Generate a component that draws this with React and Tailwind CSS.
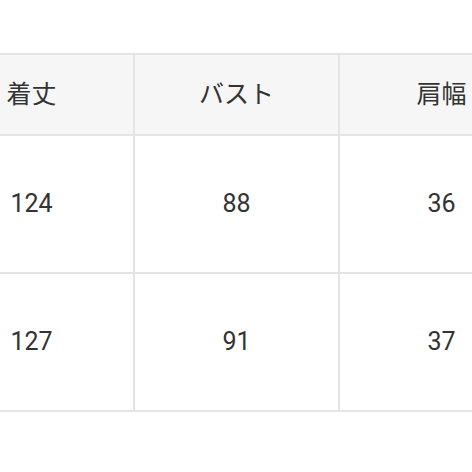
const headers = ["着丈", "バスト", "肩幅"];
const rows = [
  ["124", "88", "36"],
  ["127", "91", "37"],
];

export default function App() {
  return (
    <div
      className="w-[472px] h-[472px] bg-white overflow-hidden text-[#333333]"
      style={{ fontFamily: 'Roboto, "Noto Sans CJK JP", sans-serif' }}
    >
      <div className="mt-[53px] ml-[-70px] w-[613px] bg-[#e4e4e4] py-[2px] grid grid-cols-3 gap-[2px]">
        {headers.map(h => (
          <div key={h} className="h-[79px] bg-[#f6f6f6] flex items-center justify-center text-[25px]">
            {h}
          </div>
        ))}
        {rows.flat().map((v, i) => (
          <div key={i} className="h-[136px] bg-white flex items-center justify-center text-[25px]">
            {v}
          </div>
        ))}
      </div>
    </div>
  );
}
